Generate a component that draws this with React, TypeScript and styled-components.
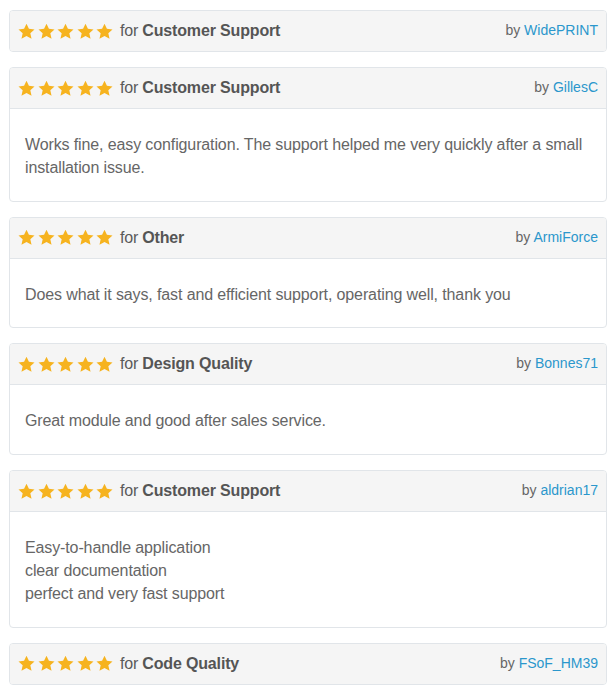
import React from 'react';
import styled, { createGlobalStyle } from 'styled-components';

const GlobalStyle = createGlobalStyle`
    body {
        margin: 0;
        background: #fff;
        font-family: "Liberation Sans", Arial, sans-serif;
    }
`;

const List = styled.div`
    display: flex;
    flex-direction: column;
    gap: 15px;
    padding: 10px 9px;
`;

const Panel = styled.section`
    border: 1px solid #e1e5e9;
    border-radius: 4px;
    background: #fff;
    overflow: hidden;
`;

const Header = styled.header<{ $alone: boolean }>`
    display: flex;
    justify-content: space-between;
    align-items: flex-start;
    padding: 10px 8px;
    background: #f5f5f5;
    border-bottom: ${p => (p.$alone ? 'none' : '1px solid #e1e5e9')};
`;

const Title = styled.div`
    display: flex;
    align-items: center;
    font-size: 16px;
    line-height: 20px;
    letter-spacing: -0.15px;
    color: #5a5a5a;

    b {
        font-weight: bold;
        margin-left: 4px;
        color: #555;
    }
`;

const Stars = styled.span`
    display: inline-flex;
    gap: 2.5px;
    margin-right: 7px;
`;

const Author = styled.div`
    font-size: 14px;
    line-height: 18px;
    color: #666;

    a {
        color: #2b97cc;
        text-decoration: none;
    }
`;

const Body = styled.div`
    padding: 25px 15px 21px;
    font-size: 16px;
    line-height: 22.8px;
    letter-spacing: -0.12px;
    color: #666;
`;

const Star = () => (
    <svg width="17" height="17" viewBox="0 0 24 24">
        <path
            fill="#f6b31f"
            d="M12 1l3.4 7.2 7.9.9-5.9 5.4 1.7 7.8L12 18.3l-7.1 4 1.7-7.8L.7 9.1l7.9-.9z"
        />
    </svg>
);

type Review = { topic: string; author: string; text?: string[] };

const reviews: Review[] = [
    { topic: 'Customer Support', author: 'WidePRINT' },
    {
        topic: 'Customer Support',
        author: 'GillesC',
        text: ['Works fine, easy configuration. The support helped me very quickly after a small installation issue.'],
    },
    {
        topic: 'Other',
        author: 'ArmiForce',
        text: ['Does what it says, fast and efficient support, operating well, thank you'],
    },
    { topic: 'Design Quality', author: 'Bonnes71', text: ['Great module and good after sales service.'] },
    {
        topic: 'Customer Support',
        author: 'aldrian17',
        text: ['Easy-to-handle application', 'clear documentation', 'perfect and very fast support'],
    },
    { topic: 'Code Quality', author: 'FSoF_HM39' },
];

const App = () => (
    <>
        <GlobalStyle />
        <List>
            {reviews.map((r, i) => (
                <Panel key={i}>
                    <Header $alone={!r.text}>
                        <Title>
                            <Stars>
                                {[0, 1, 2, 3, 4].map(s => <Star key={s} />)}
                            </Stars>
                            for <b>{r.topic}</b>
                        </Title>
                        <Author>
                            by <a href="#">{r.author}</a>
                        </Author>
                    </Header>
                    {r.text && (
                        <Body>
                            {r.text.map((line, j) => (
                                <div key={j}>{line}</div>
                            ))}
                        </Body>
                    )}
                </Panel>
            ))}
        </List>
    </>
);

export default App;
